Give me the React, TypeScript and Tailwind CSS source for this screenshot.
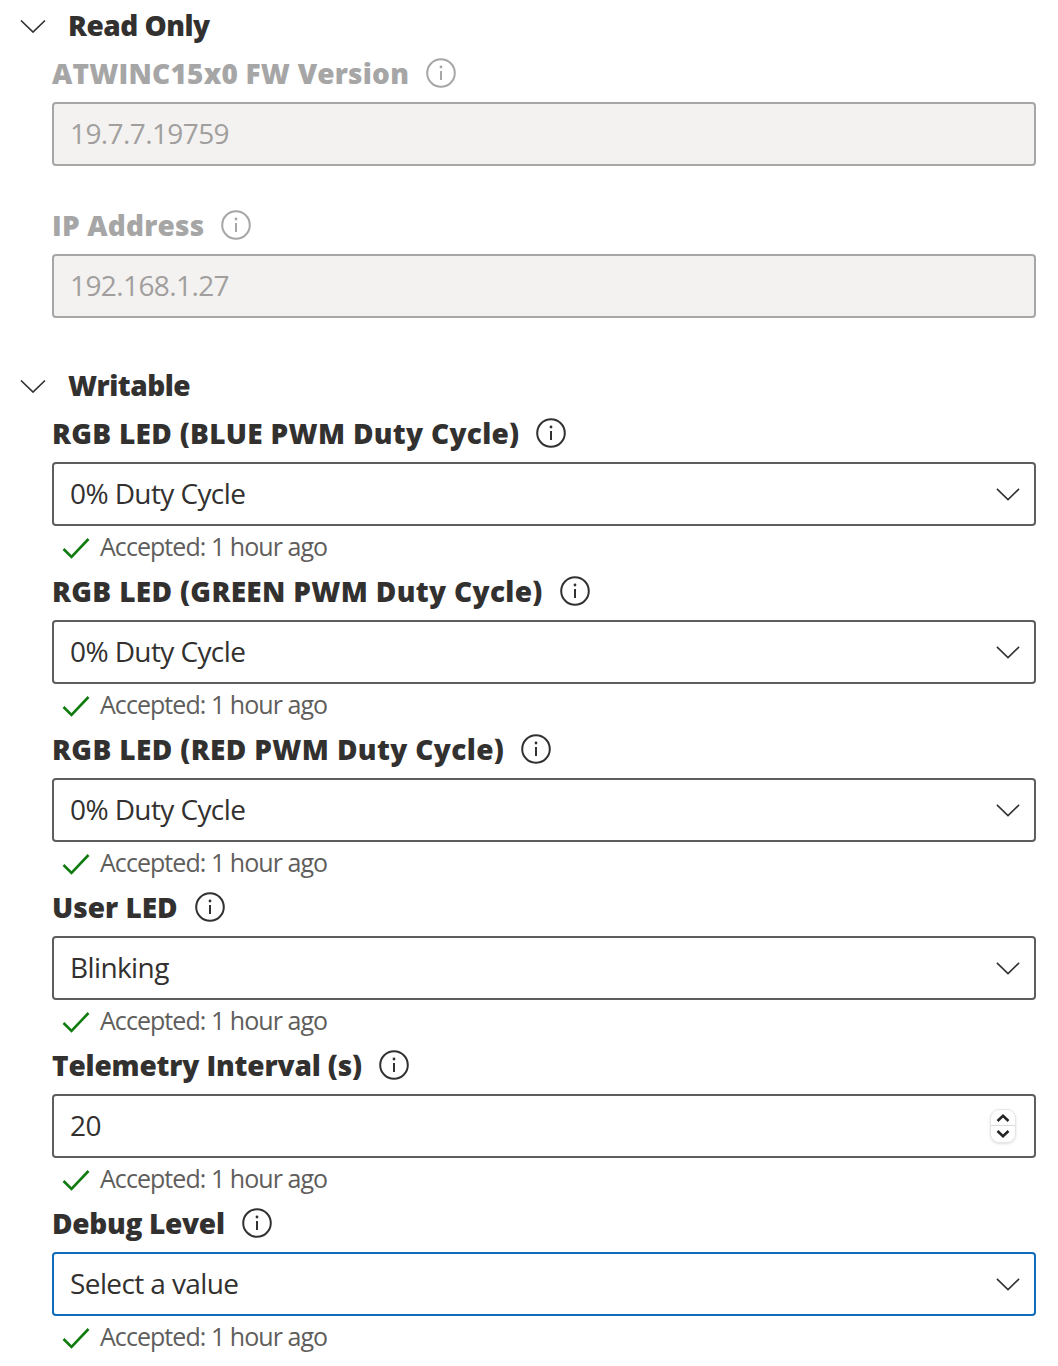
import React from 'react';

const FONT = 'font-["Open_Sans","Noto_Sans",sans-serif]';

const Chevron = ({ className }: { className: string }) => (
  <svg className={className} viewBox="0 0 26 14" fill="none" stroke="currentColor" strokeWidth="1.7">
    <path d="M1 1.5 13 13 25 1.5" />
  </svg>
);

const InfoIcon = ({ disabled }: { disabled?: boolean }) => (
  <svg className={`ml-[17px] h-[30px] w-[30px] shrink-0 ${disabled ? 'text-[#a6a6a6]' : 'text-[#323130]'}`} viewBox="0 0 30 30" fill="none" stroke="currentColor">
    <circle cx="15" cy="15" r="13.8" strokeWidth="2" />
    <path d="M15 13v9" strokeWidth="2" />
    <circle cx="15" cy="9" r="1.4" fill="currentColor" stroke="none" />
  </svg>
);

const SectionHeader = ({ title }: { title: string }) => (
  <div className="flex h-[52px] items-center">
    <Chevron className="ml-5 h-[14px] w-[26px] text-[#323130]" />
    <span className="ml-[22px] pb-[2px] text-[28px] font-extrabold tracking-[-0.5px] text-[#323130]">{title}</span>
  </div>
);

// tracking is per label: the capitals run wider in the original font
const FieldLabel = ({ label, disabled, tracking }: { label: string; disabled?: boolean; tracking: string }) => (
  <div className="flex h-[42px] items-center">
    <span className={`text-[28px] font-extrabold ${tracking} ${disabled ? 'text-[#a6a6a6]' : 'text-[#323130]'}`}>{label}</span>
    <InfoIcon disabled={disabled} />
  </div>
);

const ReadOnlyField = ({ label, value }: { label: string; value: string }) => (
  <div className="ml-[52px] mr-[22px]">
    <FieldLabel label={label} disabled tracking="tracking-[0.2px]" />
    <div className="mt-2 flex h-16 items-center rounded-[4px] border-2 border-[#a6a6a6] bg-[#f3f2f1] px-4 pb-[2px] text-[28px] tracking-[-0.6px] text-[#a19f9d]">
      {value}
    </div>
  </div>
);

interface WritableFieldProps {
  label: string;
  value: string;
  kind?: 'select' | 'number';
  focused?: boolean;
  tracking?: string;
}

const WritableField = ({ label, value, kind = 'select', focused, tracking = 'tracking-[-0.2px]' }: WritableFieldProps) => (
  <div className="ml-[52px] mr-[22px]">
    <FieldLabel label={label} tracking={tracking} />
    <div className={`mt-2 flex h-16 items-center justify-between rounded-[4px] border-2 pl-4 text-[28px] tracking-[-0.6px] text-[#323130] ${focused ? 'border-[#0f6cbd]' : 'border-[#605e5c]'} ${kind === 'select' ? 'pr-[14px]' : 'pr-[18px]'}`}>
      <span className="pb-[2px]">{value}</span>
      {kind === 'select' ? (
        <Chevron className="h-[14px] w-[24px] text-[#323130]" />
      ) : (
        <div className="flex h-[34px] w-[26px] flex-col items-center justify-around rounded-[9px] border border-[#e5e5e5] py-[2px] shadow-sm">
          <svg className="h-2 w-[14px] text-[#262626]" viewBox="0 0 14 8" fill="none" stroke="currentColor" strokeWidth="2.6">
            <path d="M1.5 7 7 1.8 12.5 7" />
          </svg>
          <div className="h-px w-full bg-[#d9d9d9]" />
          <svg className="h-2 w-[14px] text-[#262626]" viewBox="0 0 14 8" fill="none" stroke="currentColor" strokeWidth="2.6">
            <path d="M1.5 1 7 6.2 12.5 1" />
          </svg>
        </div>
      )}
    </div>
    <div className="flex h-11 items-center pl-[10px] text-[25px] tracking-[-0.95px] text-[#605e5c]">
      <svg className="h-[22px] w-[28px] text-[#107c10]" viewBox="0 0 28 22" fill="none" stroke="currentColor" strokeWidth="2.6">
        <path d="M1.5 12 9.5 20 26.5 2" />
      </svg>
      <span className="ml-[10px] pb-[2px]">Accepted: 1 hour ago</span>
    </div>
  </div>
);

export default function App() {
  return (
    <div className={`h-[1366px] w-[1058px] overflow-hidden bg-white ${FONT}`}>
      <SectionHeader title="Read Only" />
      <ReadOnlyField label="ATWINC15x0 FW Version" value="19.7.7.19759" />
      <div className="h-[38px]" />
      <ReadOnlyField label="IP Address" value="192.168.1.27" />
      <div className="h-[42px]" />
      <SectionHeader title="Writable" />
      <WritableField label="RGB LED (BLUE PWM Duty Cycle)" value="0% Duty Cycle" tracking="tracking-[0.3px]" />
      <WritableField label="RGB LED (GREEN PWM Duty Cycle)" value="0% Duty Cycle" tracking="tracking-[0.33px]" />
      <WritableField label="RGB LED (RED PWM Duty Cycle)" value="0% Duty Cycle" tracking="tracking-[0.37px]" />
      <WritableField label="User LED" value="Blinking" tracking="tracking-[0px]" />
      <WritableField label="Telemetry Interval (s)" value="20" kind="number" tracking="tracking-[-0.15px]" />
      <WritableField label="Debug Level" value="Select a value" focused tracking="tracking-[-0.3px]" />
    </div>
  );
}
